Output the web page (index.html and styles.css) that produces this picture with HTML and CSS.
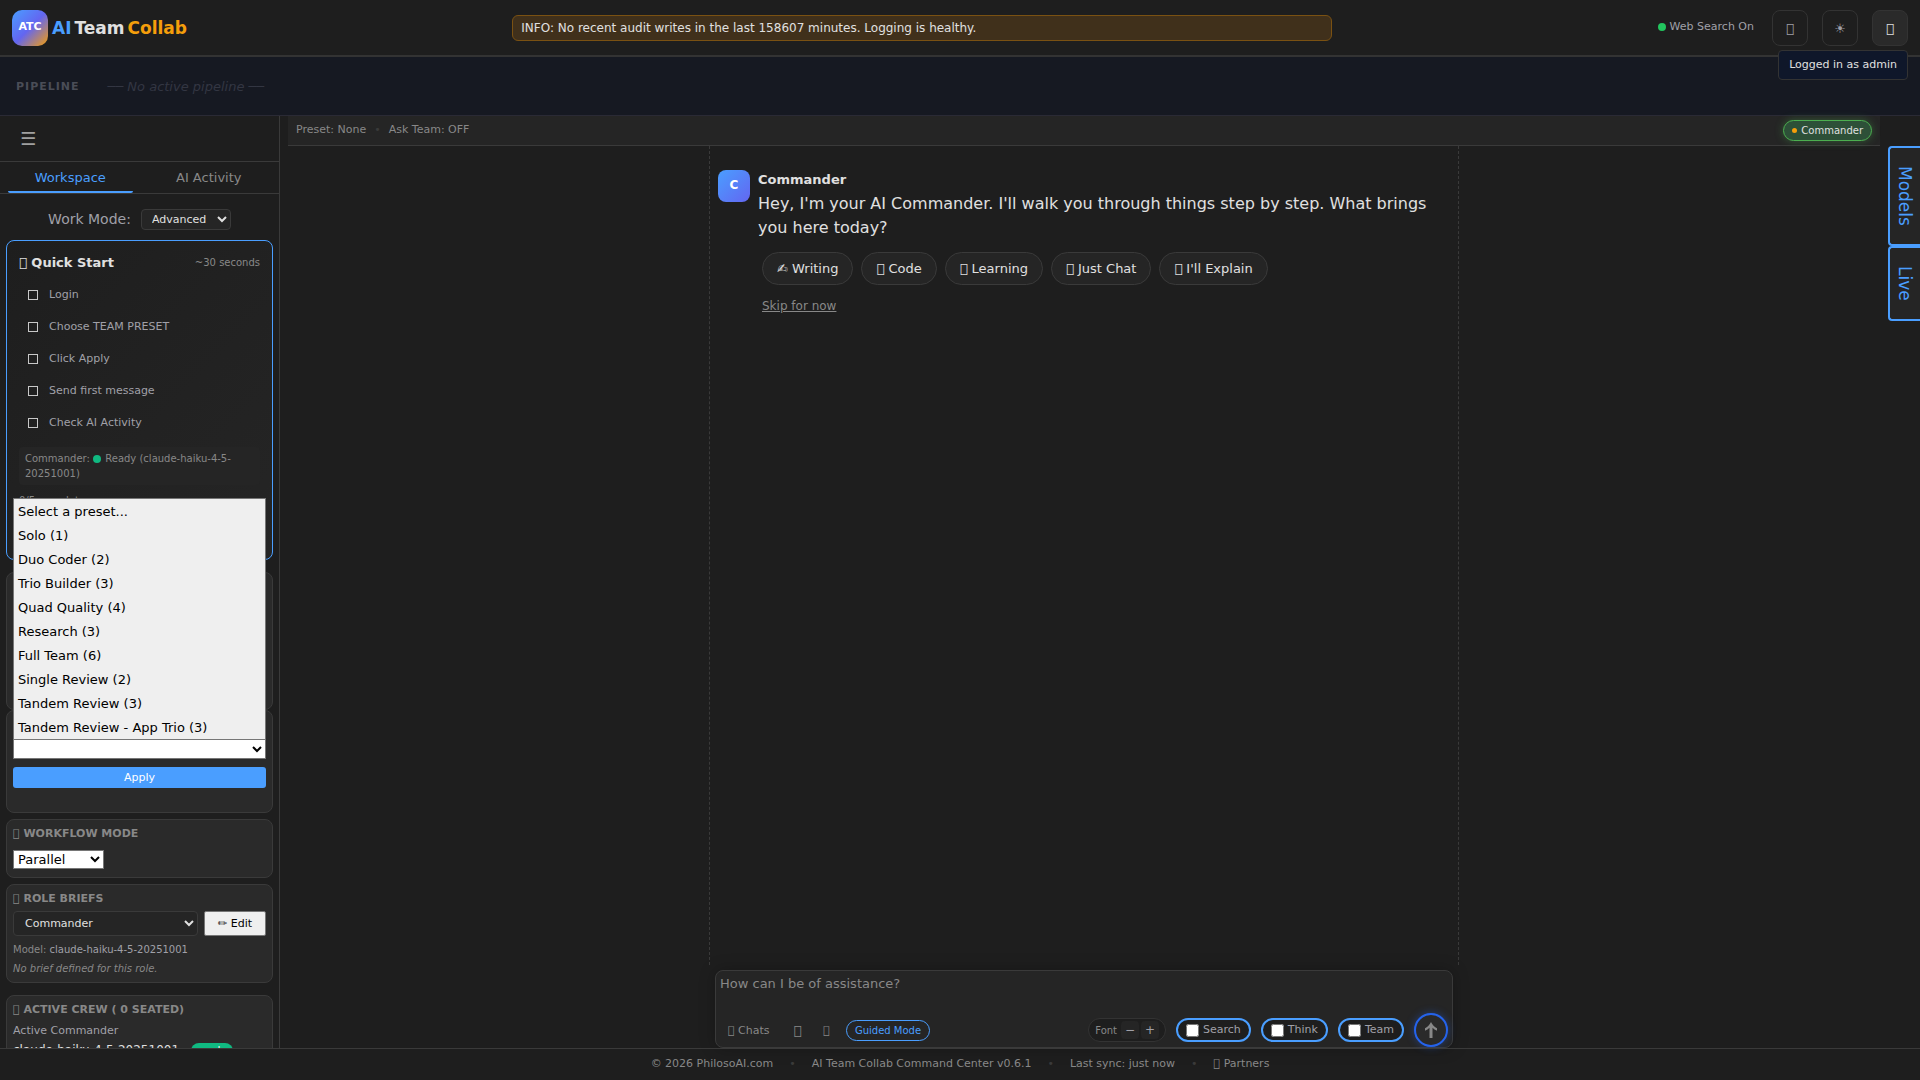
FILE: index.html
```html
<!DOCTYPE html>
<html lang="en">
<head>
  <meta charset="UTF-8">
  <title>AI Team Collab</title>
  <link rel="stylesheet" href="styles.css">
</head>
<body>
  <header class="header">
    <div class="brand">
      <div class="logo">ATC</div>
      <h1><span class="brand-ai">AI</span> <span>Team</span> <span class="brand-collab">Collab</span></h1>
    </div>
    <div class="banner" role="status">INFO: No recent audit writes in the last 158607 minutes. Logging is healthy.</div>
    <div class="header-actions">
      <span class="search-status"><span class="dot dot-green"></span>Web Search On</span>
      <button class="icon-btn" aria-label="Notifications">&#xE900;</button>
      <button class="icon-btn" aria-label="Theme">☀</button>
      <div class="user-menu">
        <button class="icon-btn active" aria-label="Account">&#xE900;</button>
        <div class="tooltip" role="tooltip">Logged in as admin</div>
      </div>
    </div>
  </header>

  <section class="pipeline">
    <span class="pipeline-label">PIPELINE</span>
    <span class="pipeline-empty">── No active pipeline ──</span>
  </section>

  <div class="layout">
    <aside class="sidebar">
      <div class="sidebar-head"><button class="menu-btn" aria-label="Menu">☰</button></div>
      <nav class="tabs">
        <button class="tab selected">Workspace</button>
        <button class="tab">AI Activity</button>
      </nav>
      <div class="work-mode">
        <label for="work-mode">Work Mode:</label>
        <select id="work-mode" class="select-dark"><option>Advanced</option></select>
      </div>

      <div class="cards">
        <section class="card quick-start">
          <div class="quick-head">
            <h2>&#xE900; Quick Start</h2>
            <span>~30 seconds</span>
          </div>
          <label class="step"><input type="checkbox">Login</label>
          <label class="step"><input type="checkbox">Choose TEAM PRESET</label>
          <label class="step"><input type="checkbox">Click Apply</label>
          <label class="step"><input type="checkbox">Send first message</label>
          <label class="step"><input type="checkbox">Check AI Activity</label>
          <p class="quick-status">Commander: <span class="dot dot-teal"></span> Ready (claude-haiku-4-5-20251001)</p>
          <p class="quick-progress">0/5 complete</p>
        </section>

        <section class="card card-blank"></section>

        <section class="card preset">
          <div class="preset-box">
            <select class="preset-list" size="10" aria-label="Team presets">
              <option>Select a preset...</option>
              <option>Solo (1)</option>
              <option>Duo Coder (2)</option>
              <option>Trio Builder (3)</option>
              <option>Quad Quality (4)</option>
              <option>Research (3)</option>
              <option>Full Team (6)</option>
              <option>Single Review (2)</option>
              <option>Tandem Review (3)</option>
              <option>Tandem Review - App Trio (3)</option>
            </select>
            <select class="select-light preset-select" aria-label="Selected preset"><option></option></select>
          </div>
          <button class="apply-btn">Apply</button>
        </section>

        <section class="card workflow">
          <h3><label for="workflow">&#xE900; WORKFLOW MODE</label></h3>
          <select id="workflow" class="select-light"><option>Parallel</option></select>
        </section>

        <section class="card briefs">
          <h3><label for="role">&#xE900; ROLE BRIEFS</label></h3>
          <div class="brief-row">
            <select id="role" class="select-dark role-select"><option>Commander</option></select>
            <button class="edit-btn">✏ Edit</button>
          </div>
          <p class="brief-model">Model: <span>claude-haiku-4-5-20251001</span></p>
          <p class="brief-empty">No brief defined for this role.</p>
        </section>

        <section class="card crew">
          <h3>&#xE900; ACTIVE CREW ( 0 SEATED)</h3>
          <p class="crew-label">Active Commander</p>
          <p class="crew-row">claude-haiku-4-5-20251001 <span class="badge">ready</span></p>
        </section>
      </div>
    </aside>

    <main class="main">
      <div class="topbar">
        <span>Preset: None</span>
        <span class="sep">•</span>
        <span>Ask Team: OFF</span>
        <span class="commander-pill"><span class="pill-dot"></span>Commander</span>
      </div>

      <div class="chat">
        <div class="message">
          <div class="avatar">C</div>
          <div class="message-body">
            <h4>Commander</h4>
            <p>Hey, I'm your AI Commander. I'll walk you through things step by step. What brings you here today?</p>
            <div class="chips">
              <button>✍ Writing</button>
              <button>&#xE900; Code</button>
              <button>&#xE900; Learning</button>
              <button>&#xE900; Just Chat</button>
              <button>&#xE900; I'll Explain</button>
            </div>
            <a class="skip" href="#">Skip for now</a>
          </div>
        </div>
      </div>

      <form class="composer">
        <textarea rows="2" placeholder="How can I be of assistance?" aria-label="Message"></textarea>
        <div class="composer-row">
          <button type="button" class="plain-btn">&#xE900; Chats</button>
          <button type="button" class="plain-btn attach" aria-label="Attach">&#xE900;</button>
          <button type="button" class="plain-btn mic" aria-label="Voice">&#xE900;</button>
          <button type="button" class="guided">Guided Mode</button>
          <div class="font-size">
            <span>Font</span>
            <button type="button" aria-label="Smaller">−</button>
            <button type="button" aria-label="Larger">+</button>
          </div>
          <label class="toggle"><input type="checkbox">Search</label>
          <label class="toggle"><input type="checkbox">Think</label>
          <label class="toggle"><input type="checkbox">Team</label>
          <button class="send" aria-label="Send">
            <svg width="14" height="16" viewBox="0 0 14 16" fill="#888">
              <path d="M7 0c1.2 2.6 3 4.600 6 6.200v2.600C11.200 8 9.700 7 8.500 5.800V16h-3V5.800C4.300 7 2.800 8 1 8.800V6.200C4 4.600 5.800 2.600 7 0z"/>
            </svg>
          </button>
        </div>
      </form>
    </main>

    <div class="rail">
      <button>Models</button>
      <button>Live</button>
    </div>
  </div>

  <footer class="footer">
    <span>© 2026 PhilosoAI.com</span>
    <span class="sep">•</span>
    <span>AI Team Collab Command Center v0.6.1</span>
    <span class="sep">•</span>
    <span>Last sync: just now</span>
    <span class="sep">•</span>
    <a href="#">&#xE900; Partners</a>
  </footer>
</body>
</html>
```

FILE: styles.css
```css
* { box-sizing: border-box; }
body { margin: 0; height: 100vh; display: flex; flex-direction: column; overflow: hidden; background: #1e1e1e; color: #e0e0e0; font-family: "DejaVu Sans", sans-serif; font-size: 11px; }
button, select, textarea, input { font-family: inherit; }
button { cursor: pointer; }
h1, h2, h3, h4, p { margin: 0; }

/* Header */
.header { flex: none; display: flex; justify-content: space-between; align-items: center; padding: 10px 12px 9px; border-bottom: 2px solid #333; }
.brand { display: flex; align-items: center; gap: 4px; }
.brand h1 { display: flex; gap: 3px; font-size: 17px; line-height: 20px; }
.brand-ai { color: #4a9eff; }
.brand-collab { color: #f59e0b; }
.logo { width: 36px; height: 36px; border-radius: 10px; background: linear-gradient(135deg, #4a9eff 0%, #6366f1 50%, #f59e0b 100%); color: #fff; font-size: 11px; font-weight: bold; line-height: 33px; text-align: center; }
.banner { width: 820px; padding: 5px 8px; border: 1px solid #7a5112; border-radius: 6px; background: #40301b; font-size: 12px; line-height: 14px; }
.header-actions { display: flex; align-items: center; gap: 14px; }
.search-status { margin: 0 4px 3px 0; color: #a0a0a8; }
.dot { display: inline-block; width: 8px; height: 8px; border-radius: 50%; vertical-align: -1px; }
.dot-green { margin-right: 4px; background: #22c55e; }
.dot-teal { margin-right: 1px; background: #10b981; }
.icon-btn { width: 36px; height: 36px; padding: 0; border: 1px solid #333; border-radius: 8px; background: #1e1e1e; color: #a0a0a8; font-size: 13px; }
.icon-btn.active { background: #2a2a2a; color: #e0e0e0; }
.user-menu { position: relative; }
.tooltip { position: absolute; top: 40px; right: 0; z-index: 5; padding: 8px 10px; border: 1px solid #333; border-radius: 4px; background: #0f172a; white-space: nowrap; line-height: 12px; }

/* Pipeline */
.pipeline { flex: none; display: flex; align-items: center; gap: 28px; height: 59px; padding: 0 16px; border-bottom: 1px solid #2a2a35; background: #161922; }
.pipeline-label { color: #4a4d57; font-weight: bold; letter-spacing: 1px; }
.pipeline-empty { color: #333642; font-size: 13px; font-style: italic; }

.layout { flex: 1; min-height: 0; display: flex; }

/* Sidebar */
.sidebar { flex: none; width: 280px; border-right: 1px solid #3a3a3a; overflow: hidden; }
.sidebar-head { display: flex; align-items: center; height: 46px; padding: 0 20px; border-bottom: 1px solid #3a3a3a; }
.menu-btn { padding: 0; border: 0; background: none; color: #a0a0a0; font-size: 18px; }
.tabs { display: flex; gap: 14px; padding: 0 8px; border-bottom: 1px solid #3a3a3a; }
.tab { flex: 1; height: 31px; padding: 1px 0 0; border: 0; border-bottom: 2px solid transparent; background: none; color: #888; font-size: 13px; }
.tab.selected { border-color: #4a9eff; border-radius: 2px; color: #4a9eff; }
.work-mode { display: flex; justify-content: center; align-items: center; gap: 10px; padding: 14px 0 10px; color: #a0a0a8; font-size: 14px; line-height: 22px; }
.select-dark { border: 1px solid #3a3a3a; border-radius: 4px; background: #252525; color: #e0e0e0; font-size: 11px; }
#work-mode { width: 90px; height: 21px; padding: 0 6px; }
.select-light { height: 19px; border: 1px solid #767676; border-radius: 0; background: #fff; color: #000; font-size: 13px; }

.cards { padding: 0 6px; }
.card { margin-bottom: 6px; padding: 6px; border: 1px solid #3a3a3a; border-radius: 8px; background: #2a2a2a; }
.card h3 { color: #888; font-size: 11px; line-height: 14px; }
.quick-start { min-height: 320px; margin-bottom: 12px; padding: 12px; border-color: #4a9eff; background: linear-gradient(135deg, #1e1e1e, #252525); }
.quick-head { display: flex; justify-content: space-between; align-items: center; margin-bottom: 5px; color: #888; font-size: 10px; line-height: 20px; }
.quick-head h2 { color: #e0e0e0; font-size: 13px; }
.step { display: flex; align-items: center; gap: 11px; height: 32px; padding-left: 9px; color: #a0a0a8; }
.step input { appearance: none; width: 10px; height: 10px; margin: 2px 0 0; border: 1px solid #c8c8c8; }
.quick-status { margin-top: 9px; padding: 4px 6px; border-radius: 4px; background: #252525; color: #888; font-size: 10px; line-height: 15px; }
.quick-progress { margin-top: 9px; color: #888; font-size: 10px; line-height: 14px; }
.card-blank { height: 138px; margin-bottom: 0; }
.preset { padding-top: 28px; padding-bottom: 24px; }
.preset-box { position: relative; }
.preset-select { display: block; width: 100%; height: 20px; }
.preset-list { position: absolute; left: 0; bottom: 19px; z-index: 3; width: 100%; height: 242px; padding: 0; border: 1px solid #767676; border-radius: 0; background: #efefef; color: #000; font-size: 13px; overflow: hidden; }
.preset-list option { height: 24px; padding: 5px 4px 3px; line-height: 16px; }
.apply-btn { display: block; width: 100%; height: 21px; margin-top: 8px; padding: 0; border: 0; border-radius: 3px; background: #4a9eff; color: #fff; font-size: 11px; }
.workflow { padding: 7px 6px 8px; }
.workflow select { display: block; width: 91px; margin-top: 9px; }
.brief-row { display: flex; gap: 6px; margin-top: 5px; }
.role-select { flex: 1; height: 25px; padding: 0 7px; }
.edit-btn { width: 62px; height: 25px; padding: 0; border: 1px solid #767676; border-radius: 2px; background: #efefef; color: #000; font-size: 11px; }
.brief-model { margin-top: 7px; color: #888; font-size: 10px; line-height: 14px; }
.brief-model span { color: #a0a0a8; }
.brief-empty { margin-top: 5px; color: #888; font-size: 10px; font-style: italic; line-height: 14px; }
.briefs { margin-bottom: 12px; padding: 7px 6px 6px; }
.crew { padding-top: 7px; }
.crew-label { margin-top: 7px; color: #a0a0a8; line-height: 14px; }
.crew-row { margin-top: 4px; font-size: 12px; line-height: 16px; white-space: nowrap; }
.badge { display: inline-block; margin-left: 8px; padding: 0 7px; border-radius: 8px; background: #10b981; color: #fff; font-size: 10px; }

/* Main area */
.main { flex: 1; min-width: 0; display: flex; flex-direction: column; align-items: center; padding: 0 8px; }
.topbar { align-self: stretch; display: flex; align-items: center; gap: 8px; height: 30px; padding: 0 8px 3px; border-bottom: 1px solid #3a3a3a; background: #252525; color: #888; }
.sep { color: #3a3a3a; }
.commander-pill { display: flex; align-items: center; gap: 4px; height: 21px; margin: 3px 0 0 auto; padding: 0 8px; border: 1px solid #4caf50; border-radius: 11px; background: #2d5038; box-shadow: 0 0 8px rgba(76, 175, 80, 0.4); color: #e0e0e0; font-size: 10px; }
.pill-dot { width: 5px; height: 5px; border-radius: 50%; background: #f59e0b; }
.chat { flex: 1; width: 100%; max-width: 750px; padding: 24px 8px; border: dashed #3a3a3a; border-width: 0 1px; }
.message { display: flex; gap: 8px; }
.avatar { flex: none; width: 32px; height: 32px; border-radius: 8px; background: linear-gradient(135deg, #4a9eff, #6366f1); color: #fff; font-size: 12px; font-weight: bold; line-height: 31px; text-align: center; }
.message h4 { margin-bottom: 2px; font-size: 13px; line-height: 20px; }
.message p { font-size: 16px; line-height: 24px; }
.chips { display: flex; flex-wrap: wrap; gap: 8px; margin: 12px 4px 14px; }
.chips button { height: 33px; padding: 0 14px; border: 1px solid #3a3a3a; border-radius: 17px; background: #252525; color: #e0e0e0; font-size: 13px; }
.skip { margin-left: 4px; color: #888; font-size: 12px; }

.composer { width: 100%; max-width: 738px; margin-top: 5px; padding: 5px 4px 0; border: 1px solid #3a3a3a; border-radius: 8px; background: #252525; box-shadow: 0 0 16px rgba(0, 0, 0, 0.25); }
.composer textarea { display: block; width: 100%; height: 37px; padding: 0; border: 0; outline: 0; resize: none; background: none; color: #e0e0e0; font-size: 13px; }
.composer textarea::placeholder { color: #888; }
.composer-row { display: flex; align-items: center; height: 34px; }
.plain-btn { padding: 0 8px; border: 0; background: none; color: #888; font-size: 11px; }
.attach { margin-left: 8px; font-size: 13px; }
.mic { margin-left: 6px; }
.guided { height: 21px; margin-left: 8px; padding: 0 8px; border: 1px solid #4a9eff; border-radius: 11px; background: none; color: #4a9eff; font-size: 10px; }
.font-size { display: flex; align-items: center; gap: 2px; height: 24px; margin-left: auto; padding: 0 6px; border: 1px solid #333; border-radius: 12px; background: #1e1e1e; color: #888; font-size: 10px; }
.font-size span { margin-right: 2px; }
.font-size button { width: 18px; height: 18px; padding: 0; border: 0; border-radius: 4px; background: #252525; color: #a0a0a8; font-size: 12px; }
.toggle { display: flex; align-items: center; gap: 4px; height: 24px; margin-left: 10px; padding: 0 8px 1px; border: 2px solid #4a9eff; border-radius: 12px; background: #1e1e1e; color: #a0a0a8; font-size: 11px; }
.toggle input { width: 13px; height: 13px; margin: 2px 0 0; }
.send { display: flex; justify-content: center; align-items: center; width: 34px; height: 34px; margin-left: 10px; padding: 0; border: 2px solid #2563eb; border-radius: 50%; background: #2a2a2a; box-shadow: 0 0 8px rgba(37, 99, 235, 0.4); }

/* Right rail */
.rail { flex: none; width: 32px; padding-top: 30px; }
.rail button { display: flex; justify-content: flex-start; align-items: center; width: 32px; height: 100px; padding: 18px 0; border: 2px solid #4a9eff; border-right: 0; border-radius: 4px 0 0 4px; background: #252525; color: #4a9eff; font-size: 17px; writing-mode: vertical-rl; }
.rail button + button { height: 75px; }

.footer { flex: none; display: flex; justify-content: center; align-items: center; gap: 16px; height: 32px; padding-bottom: 2px; border-top: 1px solid #3a3a3a; color: #888; }
.footer a { color: inherit; text-decoration: none; }
```
